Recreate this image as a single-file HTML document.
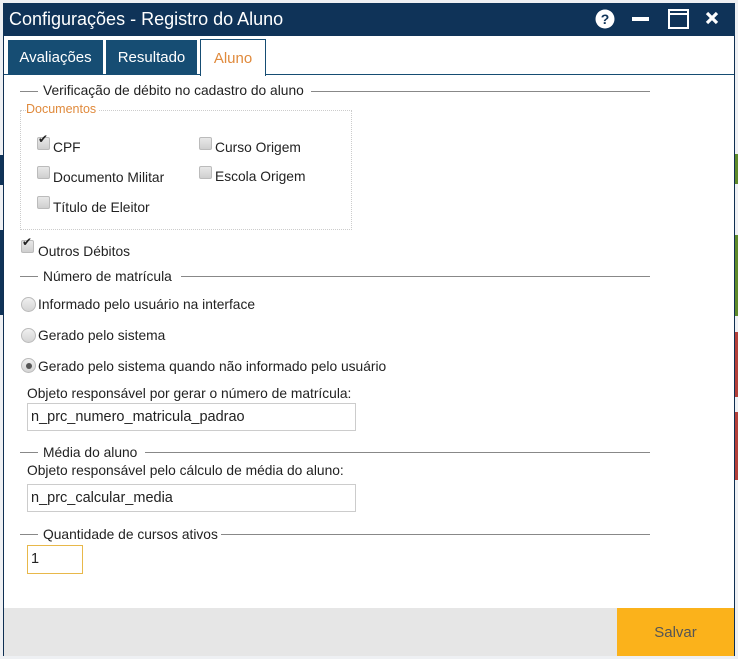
<!DOCTYPE html>
<html><head><meta charset="utf-8"><style>
*{margin:0;padding:0;box-sizing:border-box}
body{width:738px;height:659px;background:#eef0f3;position:relative;overflow:hidden;font-family:"Liberation Sans","DejaVu Sans",sans-serif;font-size:13.8px;color:#222}
.a{position:absolute}
.win{left:3px;top:3px;width:732px;height:653px;background:#fff;border:1px solid #0f2f52;border-top:none}
.title{left:3px;top:3px;width:732px;height:33px;background:#0f3358;color:#fff;font-size:18px;line-height:32px;padding-left:6px}
.tab{top:40px;height:35px;background:#164d73;color:#fff;font-size:15px;line-height:36px;text-align:center}
.leg{height:1px;background:#222;border-bottom:1px solid #888}
.cb{width:13px;height:13px;border:1px solid #bbb;border-radius:2px;background:linear-gradient(#e8e8e8,#cfcfcf)}
.rb{width:15px;height:15px;border:1px solid #bbb;border-radius:50%;background:linear-gradient(#f0f0f0,#d4d4d4)}
.inp{border:1px solid #ccc;background:#fff;font-size:14.5px;padding-left:3px;line-height:26px}
</style></head><body>
<div class="a" style="left:735px;top:154px;width:3px;height:30px;background:#5f8a2a"></div>
<div class="a" style="left:735px;top:235px;width:3px;height:81px;background:#5f8a2a"></div>
<div class="a" style="left:735px;top:332px;width:3px;height:65px;background:#b3403a"></div>
<div class="a" style="left:735px;top:412px;width:3px;height:68px;background:#b3403a"></div>
<div class="a" style="left:0;top:155px;width:3px;height:30px;background:#0f3358"></div>
<div class="a" style="left:0;top:230px;width:3px;height:85px;background:#0f3358"></div>
<div class="a win"></div>
<div class="a title">Configurações - Registro do Aluno</div>
<svg class="a" style="left:594px;top:8px" width="130" height="22">
<circle cx="11" cy="11" r="9.5" fill="#fff"/><text x="11" y="16" text-anchor="middle" font-size="14" font-weight="bold" fill="#0f3358" font-family="Liberation Sans">?</text>
<rect x="38" y="9" width="17" height="4" fill="#fff"/>
<rect x="75" y="2" width="19" height="18" fill="none" stroke="#fff" stroke-width="2"/><line x1="75" y1="6" x2="94" y2="6" stroke="#fff" stroke-width="2"/>
<path d="M113 5 L123 15 M123 5 L113 15" stroke="#fff" stroke-width="3.2"/>
</svg>
<div class="a tab" style="left:8px;width:95px">Avaliações</div>
<div class="a tab" style="left:106px;width:91px">Resultado</div>
<div class="a" style="left:200px;top:39px;width:66px;height:37px;background:#fff;border:1px solid #164d73;border-bottom:none;color:#e08a3c;font-size:15px;line-height:38px;text-align:center">Aluno</div>
<div class="a" style="left:4px;top:74px;width:196px;height:1px;background:#164d73"></div>
<div class="a" style="left:265px;top:74px;width:469px;height:1px;background:#164d73"></div>

<div class="a leg" style="left:20px;top:91px;width:18px"></div>
<div class="a" style="left:43px;top:83px">Verificação de débito no cadastro do aluno</div>
<div class="a leg" style="left:311px;top:91px;width:339px"></div>
<div class="a" style="left:20px;top:110px;width:332px;height:120px;border:1px dotted #ccc"></div>
<div class="a" style="left:26px;top:102px;background:#fff;color:#e08a3c;font-size:12.5px;padding-right:2px">Documentos</div>
<div class="a cb" style="left:37px;top:137px"></div><div class="a" style="left:38px;top:132px;font-size:12px">✔</div>
<div class="a" style="left:53px;top:140px">CPF</div>
<div class="a cb" style="left:37px;top:166px"></div><div class="a" style="left:53px;top:170px">Documento Militar</div>
<div class="a cb" style="left:37px;top:196px"></div><div class="a" style="left:53px;top:200px">Título de Eleitor</div>
<div class="a cb" style="left:199px;top:137px"></div><div class="a" style="left:215px;top:140px">Curso Origem</div>
<div class="a cb" style="left:199px;top:166px"></div><div class="a" style="left:215px;top:169px">Escola Origem</div>

<div class="a cb" style="left:21px;top:240px"></div><div class="a" style="left:22px;top:235px;font-size:12px">✔</div>
<div class="a" style="left:38px;top:244px">Outros Débitos</div>

<div class="a leg" style="left:20px;top:276px;width:18px"></div>
<div class="a" style="left:43px;top:269px">Número de matrícula</div>
<div class="a leg" style="left:181px;top:276px;width:469px"></div>
<div class="a rb" style="left:21px;top:297px"></div><div class="a" style="left:38px;top:297px">Informado pelo usuário na interface</div>
<div class="a rb" style="left:21px;top:328px"></div><div class="a" style="left:38px;top:328px">Gerado pelo sistema</div>
<div class="a rb" style="left:21px;top:358px"></div><div class="a" style="left:26px;top:363px;width:6px;height:6px;border-radius:50%;background:#555"></div>
<div class="a" style="left:38px;top:359px">Gerado pelo sistema quando não informado pelo usuário</div>
<div class="a" style="left:27px;top:386px">Objeto responsável por gerar o número de matrícula:</div>
<div class="a inp" style="left:27px;top:403px;width:329px;height:28px">n_prc_numero_matricula_padrao</div>

<div class="a leg" style="left:20px;top:452px;width:18px"></div>
<div class="a" style="left:43px;top:445px">Média do aluno</div>
<div class="a leg" style="left:145px;top:452px;width:505px"></div>
<div class="a" style="left:27px;top:463px">Objeto responsável pelo cálculo de média do aluno:</div>
<div class="a inp" style="left:27px;top:484px;width:329px;height:28px">n_prc_calcular_media</div>

<div class="a leg" style="left:20px;top:534px;width:18px"></div>
<div class="a" style="left:43px;top:527px">Quantidade de cursos ativos</div>
<div class="a leg" style="left:221px;top:534px;width:429px"></div>
<div class="a inp" style="left:27px;top:545px;width:56px;height:29px;border-color:#e8b84a">1</div>

<div class="a" style="left:4px;top:608px;width:613px;height:48px;background:#e6e6e6"></div>
<div class="a" style="left:617px;top:608px;width:117px;height:48px;background:#fbb21b;color:#555;font-size:15px;line-height:50px;text-align:center">Salvar</div>
</body></html>
